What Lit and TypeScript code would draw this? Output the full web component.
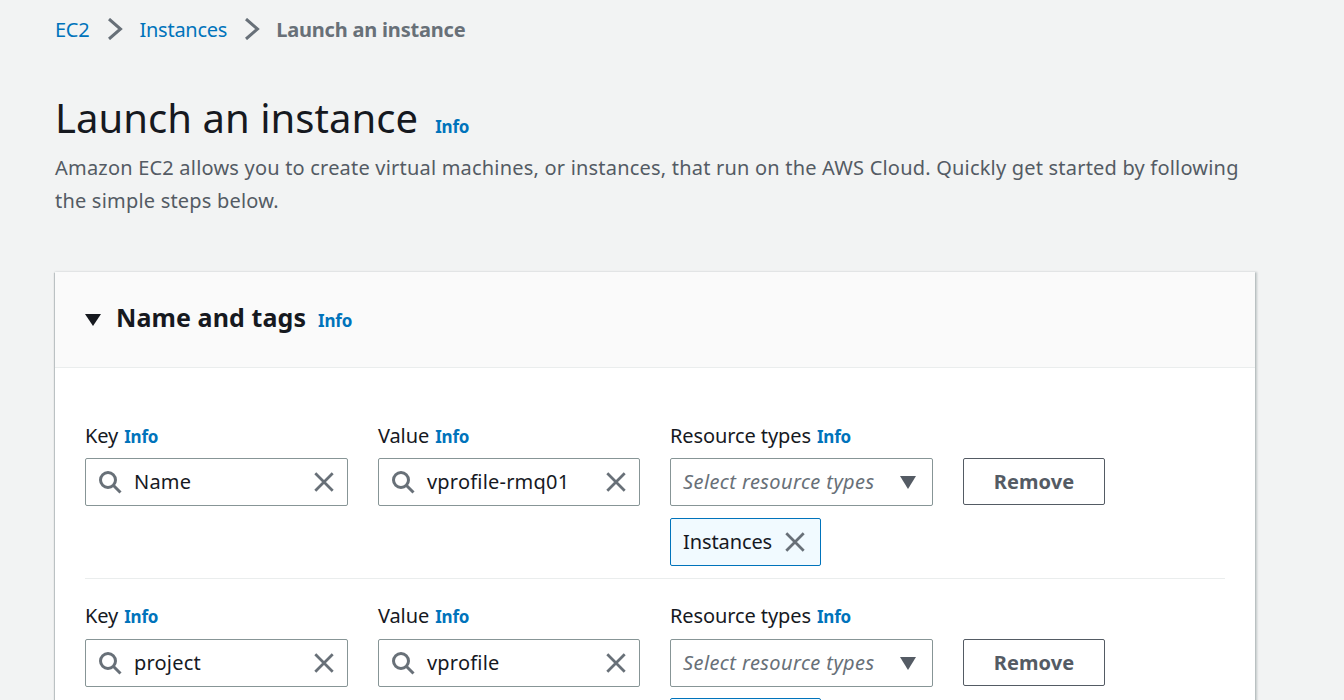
import { LitElement, html, css, svg } from 'lit';
import { customElement } from 'lit/decorators.js';

interface TagRow {
  key: string;
  value: string;
}

const TAGS: TagRow[] = [
  { key: 'Name', value: 'vprofile-rmq01' },
  { key: 'project', value: 'vprofile' },
];

const searchIcon = svg`<circle cx="10" cy="10" r="7.5" /><path d="M15.5 15.5 L22.5 22.5" />`;
const closeIcon = svg`<path d="M2.5 2.5 L21.5 21.5 M21.5 2.5 L2.5 21.5" />`;

@customElement('app-root')
export class AppRoot extends LitElement {
  static styles = css`
    :host {
      display: block;
      height: 700px;
      overflow: hidden;
      background: #f2f3f3;
      font-family: 'Noto Sans', 'Open Sans', sans-serif;
      color: #16191f;
    }
    .page {
      padding: 0 89px 0 55px;
    }
    .crumbs {
      display: flex;
      align-items: center;
      height: 58px;
      margin-bottom: 2px;
      font-size: 20px;
      letter-spacing: -0.25px;
    }
    .crumbs a {
      color: #0073bb;
    }
    .crumbs .current {
      color: #687078;
      font-weight: 700;
      letter-spacing: -0.2px;
    }
    .crumbs svg {
      width: 16px;
      height: 22px;
      margin: 0 16px 0 17px;
      fill: none;
      stroke: #687078;
      stroke-width: 3;
    }
    .crumbs svg:first-of-type {
      margin-left: 18px;
    }
    .title {
      display: flex;
      align-items: baseline;
      margin-top: 32px;
      height: 56px;
    }
    h1 {
      margin: 0;
      font-size: 40px;
      font-weight: 400;
      line-height: 56px;
      letter-spacing: 0.05px;
    }
    .info {
      color: #0073bb;
      font-weight: 700;
      font-size: 17px;
      letter-spacing: -0.2px;
    }
    .title .info {
      margin-left: 17px;
    }
    .lead {
      margin: 5px 0 0;
      font-size: 20px;
      line-height: 33px;
      color: #545b64;
      letter-spacing: 0.2px;
      width: 1200px;
    }
    .card {
      margin-top: 55px;
      width: 1200px;
      background: #fff;
      box-shadow: 0 1px 1px 0 rgba(0, 28, 36, 0.3), 1px 1px 2px 1px rgba(0, 28, 36, 0.2), -1px 1px 1px 0 rgba(0, 28, 36, 0.12);
    }
    .card-head {
      display: flex;
      align-items: center;
      height: 95px;
      padding: 0 30px;
      background: #fafafa;
      border-bottom: 1px solid #eaeded;
    }
    .caret {
      width: 16px;
      height: 12px;
      margin-right: 15px;
      fill: #16191f;
    }
    h2 {
      margin: 0 0 5px;
      font-size: 25px;
      font-weight: 700;
      letter-spacing: 0.1px;
    }
    .card-head .info {
      margin: 2px 0 0 12px;
    }
    .card-body {
      padding: 54px 30px 0;
    }
    .row {
      display: grid;
      grid-template-columns: 263px 262px 263px 142px;
      column-gap: 30px;
      padding-bottom: 12px;
      margin-bottom: 24px;
      border-bottom: 1px solid #eaeded;
    }
    .label {
      display: flex;
      align-items: baseline;
      gap: 6px;
      height: 36px;
      font-size: 20px;
      line-height: 28px;
      letter-spacing: -0.1px;
    }
    .row + .row .label {
      line-height: 26px;
    }
    .field {
      display: flex;
      align-items: center;
      box-sizing: border-box;
      height: 48px;
      border: 1px solid #879596;
      border-radius: 2px;
      background: #fff;
      font-size: 20px;
      letter-spacing: 0.2px;
    }
    .field .text {
      flex: 1;
      padding-bottom: 2px;
    }
    .icon {
      width: 22px;
      height: 22px;
      fill: none;
      stroke: #687078;
      stroke-width: 3;
    }
    .field .search {
      width: 24px;
      height: 24px;
      margin: 0 12px 0 12px;
    }
    .field .close {
      margin-right: 12px;
    }
    .select {
      padding-left: 12px;
    }
    .select .text {
      font-style: italic;
      color: #687078;
      letter-spacing: 0.4px;
    }
    .arrow {
      width: 16px;
      height: 13px;
      margin-right: 16px;
      fill: #545b64;
    }
    .remove {
      box-sizing: border-box;
      display: flex;
      align-items: center;
      justify-content: center;
      height: 47px;
      margin-top: 36px;
      border: 1px solid #545b64;
      border-radius: 2px;
      background: #fff;
      color: #545b64;
      font: 700 20px 'Noto Sans', 'Open Sans', sans-serif;
      letter-spacing: 0.1px;
      padding: 0;
    }
    .chip {
      display: inline-flex;
      align-items: center;
      box-sizing: border-box;
      width: 151px;
      height: 48px;
      margin-top: 12px;
      padding: 0 14px 0 12px;
      border: 1px solid #0073bb;
      border-radius: 2px;
      background: #f1faff;
      font-size: 20px;
      letter-spacing: -0.1px;
    }
    .row + .row .chip {
      margin-top: 11px;
    }
    .chip .text {
      flex: 1;
      padding-bottom: 2px;
    }
  `;

  private renderRow(tag: TagRow) {
    return html`
      <div class="row">
        <div>
          <div class="label">Key <span class="info">Info</span></div>
          <div class="field">
            <svg class="icon search" viewBox="0 0 24 24">${searchIcon}</svg>
            <span class="text">${tag.key}</span>
            <svg class="icon close" viewBox="0 0 24 24">${closeIcon}</svg>
          </div>
        </div>
        <div>
          <div class="label">Value <span class="info">Info</span></div>
          <div class="field">
            <svg class="icon search" viewBox="0 0 24 24">${searchIcon}</svg>
            <span class="text">${tag.value}</span>
            <svg class="icon close" viewBox="0 0 24 24">${closeIcon}</svg>
          </div>
        </div>
        <div>
          <div class="label">Resource types <span class="info">Info</span></div>
          <div class="field select">
            <span class="text">Select resource types</span>
            <svg class="arrow" viewBox="0 0 16 13"><path d="M0 0 H16 L8 13 Z" /></svg>
          </div>
          <div class="chip">
            <span class="text">Instances</span>
            <svg class="icon" viewBox="0 0 24 24">${closeIcon}</svg>
          </div>
        </div>
        <button class="remove">Remove</button>
      </div>
    `;
  }

  render() {
    const chevron = html`<svg viewBox="0 0 16 22"><path d="M2 1 L13.5 11 L2 21" /></svg>`;
    return html`
      <div class="page">
        <nav class="crumbs">
          <a>EC2</a>${chevron}<a>Instances</a>${chevron}<span class="current">Launch an instance</span>
        </nav>
        <div class="title">
          <h1>Launch an instance</h1>
          <span class="info">Info</span>
        </div>
        <p class="lead">
          Amazon EC2 allows you to create virtual machines, or instances, that run on the AWS Cloud. Quickly get started by following the simple steps below.
        </p>
        <section class="card">
          <header class="card-head">
            <svg class="caret" viewBox="0 0 16 12"><path d="M0 0 H16 L8 12 Z" /></svg>
            <h2>Name and tags</h2>
            <span class="info">Info</span>
          </header>
          <div class="card-body">${TAGS.map((t) => this.renderRow(t))}</div>
        </section>
      </div>
    `;
  }
}
